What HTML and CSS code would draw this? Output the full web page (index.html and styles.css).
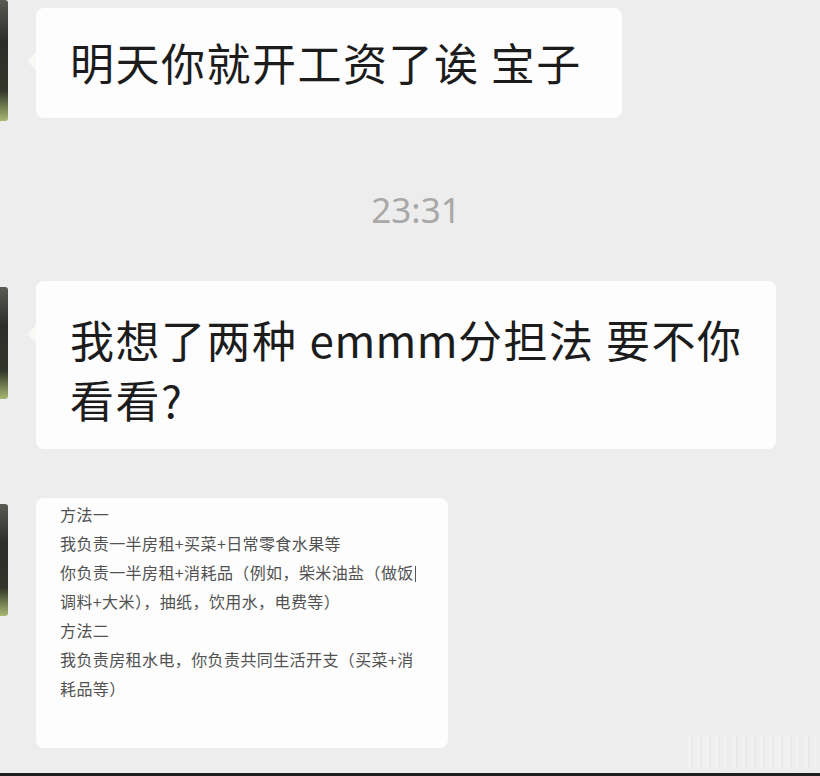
FILE: index.html
```html
<!DOCTYPE html>
<html lang="zh-CN">
<head>
    <meta charset="UTF-8">
    <meta name="viewport" content="width=device-width, initial-scale=1.0">
    <title>聊天记录</title>
    <link rel="stylesheet" href="styles.css">
</head>
<body>

    <div class="screen">
        <div class="chat">
            <div class="row">
                <div class="avatar avatar-top"></div>
                <div class="bubble bubble-first">明天你就开工资了诶 宝子</div>
            </div>

            <div class="time">23:31</div>

            <div class="row">
                <div class="avatar"></div>
                <div class="bubble bubble-second">我想了两种<span class="latin">emmm</span>分担法 要不你<br>看看?</div>
            </div>

            <div class="row row-note">
                <div class="avatar"></div>
                <div class="bubble note">
                    <div class="note-line">方法一</div>
                    <div class="note-line">我负责一半房租+买菜+日常零食水果等</div>
                    <div class="note-line">你负责一半房租+消耗品（例如，柴米油盐（做饭<span class="cursor"></span></div>
                    <div class="note-line">调料+大米），抽纸，饮用水，电费等）</div>
                    <div class="note-line">方法二</div>
                    <div class="note-line">我负责房租水电，你负责共同生活开支（买菜+消</div>
                    <div class="note-line">耗品等）</div>
                </div>
            </div>
        </div>
        <div class="watermark"></div>
    </div>
    <div class="bottom-line"></div>

</body>
</html>
```

FILE: styles.css
```css
body {
    margin: 0;
    background: #ededed;
    font-family: "Noto Sans CJK SC", "Noto Sans", sans-serif;
    color: #1c1c1c;
}
.screen {
    position: relative;
    height: 773px;
    overflow: hidden;
}
.chat {
    padding-top: 8px;
}
.row {
    display: flex;
    align-items: flex-start;
}
.avatar {
    width: 8px;
    height: 112px;
    margin-top: 6px;
    margin-right: 28px;
    flex-shrink: 0;
    background: linear-gradient(180deg, #5a5a54 0%, #2c2c2a 35%, #33362a 75%, #a9b872 100%);
    border-radius: 0 3px 3px 0;
}
.avatar-top {
    margin-top: -8px;
    height: 121px;
}
.bubble {
    position: relative;
    background: #fdfdfd;
    border-radius: 8px;
    font-size: 44px;
    line-height: 60px;
    letter-spacing: 1.5px;
}
.bubble::before {
    content: "";
    position: absolute;
    left: -9px;
    top: 44px;
    border-top: 9px solid transparent;
    border-bottom: 9px solid transparent;
    border-right: 9px solid #f8f9f4;
}
.bubble-first {
    padding: 24px 40px 26px 34px;
}
.bubble-second {
    padding: 28px 34px 20px 34px;
}
.latin {
    margin-left: 12px;
    letter-spacing: 0.5px;
}
.time {
    margin: 69px 0 51px;
    padding-left: 12px;
    text-align: center;
    font-family: "Noto Sans", sans-serif;
    font-size: 35px;
    line-height: 40px;
    color: #a8a8a8;
}
.row-note {
    margin-top: 49px;
}
.note {
    width: 412px;
    height: 250px;
    box-sizing: border-box;
    padding: 2px 0 0 24px;
    font-size: 16px;
    line-height: 29px;
    letter-spacing: 0.4px;
    color: #525252;
}
.note::before {
    display: none;
}
.note-line {
    white-space: nowrap;
}
.cursor {
    display: inline-block;
    width: 1px;
    height: 16px;
    margin-left: 1px;
    vertical-align: -3px;
    background: #555;
}
.watermark {
    position: absolute;
    left: 688px;
    top: 736px;
    width: 128px;
    height: 33px;
    background: repeating-linear-gradient(90deg, rgba(255, 255, 255, 0.25) 0 3px, rgba(0, 0, 0, 0.015) 3px 5px, rgba(255, 255, 255, 0.1) 5px 9px);
}
.bottom-line {
    height: 3px;
    background: #1e1e1e;
}
```
